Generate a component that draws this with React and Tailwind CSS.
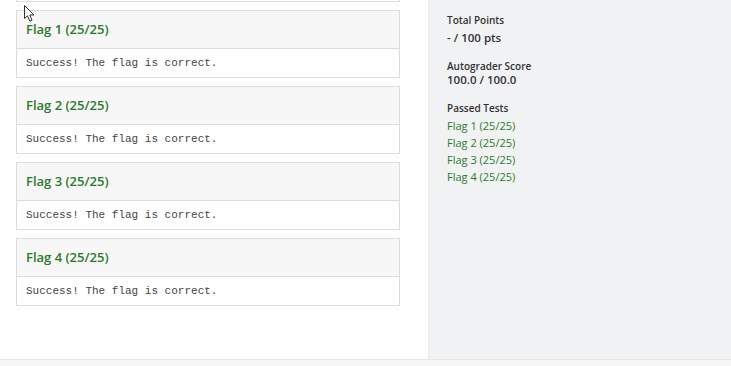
const flags = [1, 2, 3, 4]

function Cursor() {
  return (
    <svg className="absolute left-[24px] top-[5px]" width="12" height="18" viewBox="0 0 12 18">
      <path d="M0.5 0.5 L0.5 13.5 L3.5 10.8 L5.8 16.2 L8 15.2 L5.8 10 L10 10 Z" fill="#fff" stroke="#333" strokeWidth="1" strokeLinejoin="round" />
    </svg>
  )
}

function FlagCard({ n }) {
  return (
    <div className="border border-[#dcdcdc] bg-white">
      <div className="h-[38px] bg-[#f7f7f7] border-b border-[#dcdcdc] px-[9px] flex items-center">
        <h3 className="text-[13px] font-semibold text-[#2b7a2b]">Flag {n} (25/25)</h3>
      </div>
      <div className="h-[28px] px-[9px] flex items-center">
        <pre className="text-[11px] leading-[14px] text-[#444]" style={{ fontFamily: "'Liberation Mono', monospace" }}>Success! The flag is correct.</pre>
      </div>
    </div>
  )
}

export default function App() {
  return (
    <div className="w-[731px] h-[366px] flex flex-col overflow-hidden relative bg-white" style={{ fontFamily: "'Open Sans', sans-serif" }}>
      <div className="flex h-[359px]">
        <div className="w-[428px] pl-4 pr-[28px] flex flex-col gap-[8px]">
          <div className="h-[2px] border-x border-b border-[#dcdcdc]" />
          {flags.map((n) => (
            <FlagCard key={n} n={n} />
          ))}
        </div>
        <div className="flex-1 bg-[#f1f2f4] border-l border-[#eaebed] pl-[18px] pt-[12px] text-[#333]">
          <div className="text-[10px] font-semibold leading-[16px]">Total Points</div>
          <div className="text-[11.5px] font-semibold leading-[18px] mt-[1px]">- / 100 pts</div>
          <div className="text-[10px] font-semibold leading-[14px] mt-[12px]">Autograder Score</div>
          <div className="text-[11.5px] font-semibold leading-[14px]">100.0 / 100.0</div>
          <div className="text-[10px] font-semibold leading-[16px] mt-[13px]">Passed Tests</div>
          <div className="text-[11px] text-[#2b7a2b] leading-[17px] mt-[1px]">
            {flags.map((n) => (
              <div key={n}>Flag {n} (25/25)</div>
            ))}
          </div>
        </div>
      </div>
      <div className="flex-1 border-t border-[#e6e6e6] bg-[#f7f7f7]" />
      <Cursor />
    </div>
  )
}
